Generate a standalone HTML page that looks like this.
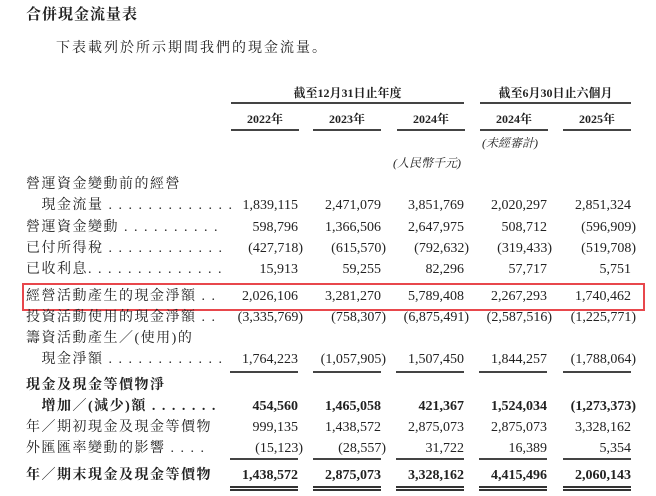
<!DOCTYPE html>
<html><head><meta charset="utf-8"><style>
body{margin:0;width:656px;height:496px;background:#fff;position:relative;overflow:hidden;font-family:"Liberation Serif","Noto Serif CJK SC",serif;color:#222;}
.a{position:absolute;white-space:nowrap;line-height:1;}
.t{font-size:14px;}
.n{font-size:14px;text-align:right;width:80px;}
.b{font-weight:bold;}
.l{position:absolute;height:2px;background:#444;}
.d{position:absolute;height:5px;border-top:2px solid #333;border-bottom:2px solid #333;box-sizing:border-box;}
.lab{letter-spacing:1.5px;}
</style></head><body>
<div class="a b" style="left:26px;top:8px;font-size:15px;letter-spacing:1px">合併現金流量表</div>
<div class="a t" style="left:56px;top:42px;letter-spacing:2px">下表載列於所示期間我們的現金流量。</div>
<div class="a b" style="left:231px;width:233px;text-align:center;top:87px;font-size:12px">截至12月31日止年度</div>
<div class="a b" style="left:480px;width:151px;text-align:center;top:87px;font-size:12px">截至6月30日止六個月</div>
<div class="l" style="left:231px;width:233px;top:102px"></div>
<div class="l" style="left:480px;width:151px;top:102px"></div>
<div class="a b" style="left:231px;width:68px;text-align:center;top:113px;font-size:12px">2022年</div>
<div class="a b" style="left:313px;width:68px;text-align:center;top:113px;font-size:12px">2023年</div>
<div class="a b" style="left:397px;width:68px;text-align:center;top:113px;font-size:12px">2024年</div>
<div class="a b" style="left:480px;width:68px;text-align:center;top:113px;font-size:12px">2024年</div>
<div class="a b" style="left:563px;width:68px;text-align:center;top:113px;font-size:12px">2025年</div>
<div class="l" style="left:231px;width:68px;top:129px"></div>
<div class="l" style="left:313px;width:68px;top:129px"></div>
<div class="l" style="left:397px;width:68px;top:129px"></div>
<div class="l" style="left:480px;width:68px;top:129px"></div>
<div class="l" style="left:563px;width:68px;top:129px"></div>
<div class="a" style="left:482px;top:137px;font-size:12px;font-style:italic">(未經審計)</div>
<div class="a" style="left:393px;top:157px;font-size:12px;font-style:italic">(人民幣千元)</div>

<div style="position:absolute;left:22px;top:283px;width:623px;height:28px;border:2px solid #e8474c;box-sizing:border-box"></div>

<div id="rows"></div>
<script>
const R=[
[178,"營運資金變動前的經營",null],
[199,"　現金流量 . . . . . . . . . . . . .",["1,839,115","2,471,079","3,851,769","2,020,297","2,851,324"]],
[221,"營運資金變動 . . . . . . . . . .",["598,796","1,366,506","2,647,975","508,712","(596,909)"]],
[242,"已付所得稅 . . . . . . . . . . . .",["(427,718)","(615,570)","(792,632)","(319,433)","(519,708)"]],
[263,"已收利息. . . . . . . . . . . . . .",["15,913","59,255","82,296","57,717","5,751"]],
[290,"經營活動產生的現金淨額 . .",["2,026,106","3,281,270","5,789,408","2,267,293","1,740,462"]],
[311,"投資活動使用的現金淨額 . .",["(3,335,769)","(758,307)","(6,875,491)","(2,587,516)","(1,225,771)"]],
[332,"籌資活動產生／(使用)的",null],
[353,"　現金淨額 . . . . . . . . . . . .",["1,764,223","(1,057,905)","1,507,450","1,844,257","(1,788,064)"]],
[379,"現金及現金等價物淨",null,1],
[400,"　增加／(減少)額 . . . . . . .",["454,560","1,465,058","421,367","1,524,034","(1,273,373)"],1],
[421,"年／期初現金及現金等價物",["999,135","1,438,572","2,875,073","2,875,073","3,328,162"]],
[442,"外匯匯率變動的影響 . . . .",["(15,123)","(28,557)","31,722","16,389","5,354"]],
[469,"年／期末現金及現金等價物",["1,438,572","2,875,073","3,328,162","4,415,496","2,060,143"],1]];
const X=[298,381,464,547,631];
let h="";
for(const r of R){
h+=`<div class="a t lab${r[3]?' b':''}" style="left:26px;top:${r[0]}px">${r[1]}</div>`;
if(r[2])r[2].forEach((v,i)=>{let p=v[0]=="("?5:0;h+=`<div class="a n${r[3]?' b':''}" style="left:${X[i]-80+p}px;top:${r[0]}px">${v}</div>`;});
}
X.forEach(x=>{h+=`<div class="l" style="left:${x-68}px;width:68px;top:371px;height:1.5px"></div>`;
h+=`<div class="l" style="left:${x-68}px;width:68px;top:458px;height:1.5px"></div>`;
h+=`<div class="d" style="left:${x-68}px;width:68px;top:486px"></div>`;});
document.getElementById("rows").innerHTML=h;
</script>
</body></html>
